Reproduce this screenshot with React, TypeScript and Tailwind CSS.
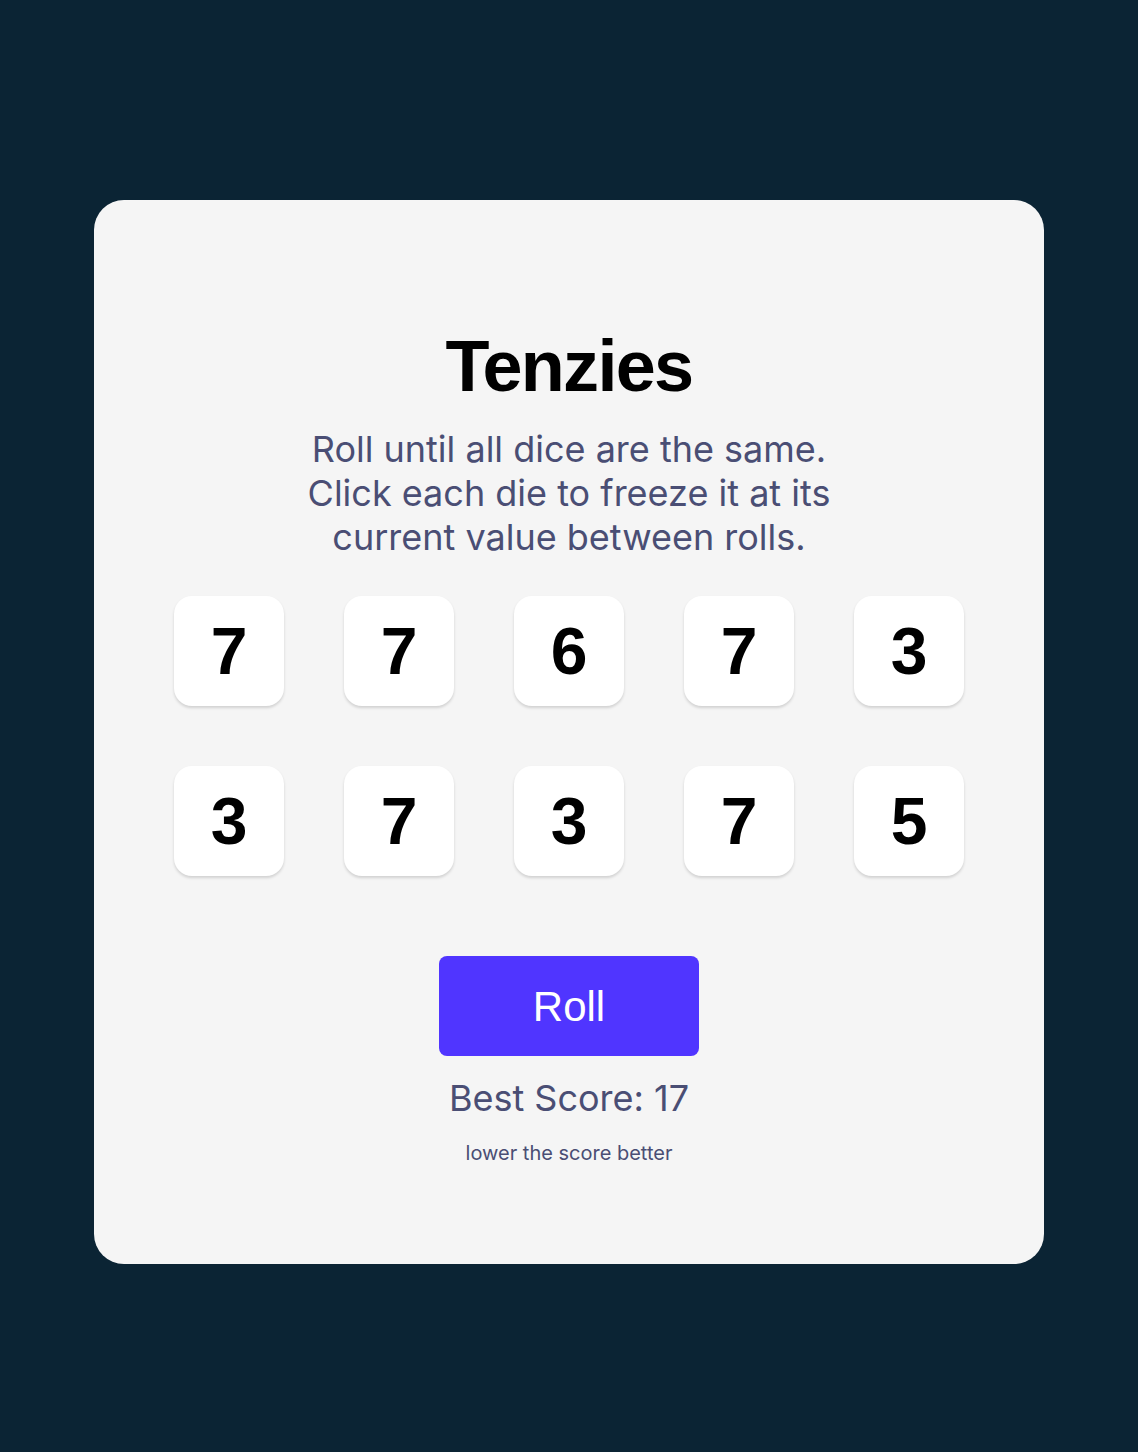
import React from "react";

const dice = [7, 7, 6, 7, 3, 3, 7, 3, 7, 5];

export default function App() {
  return (
    <div className="min-h-[1452px] w-full bg-[#0B2434] flex justify-center pt-[200px]" style={{ fontFamily: "Inter, 'Noto Sans', sans-serif" }}>
      <main className="w-[950px] h-[1064px] bg-[#F5F5F5] rounded-[30px] flex flex-col items-center pt-[123px]">
        <h1 className="text-[72px] font-bold text-black leading-[87px] tracking-[-1.7px] m-0" style={{ fontFamily: "'Liberation Sans', Arial, sans-serif" }}>Tenzies</h1>
        <p className="mt-[17px] text-[36px] leading-[44px] text-[#4A4E74] text-center w-[540px]">
          Roll until all dice are the same. Click each die to freeze it at its current value between rolls.
        </p>
        <div className="mt-[37px] grid grid-cols-5 gap-[60px]">
          {dice.map((d, i) => (
            <button
              key={i}
              className="w-[110px] h-[110px] bg-white rounded-[18px] shadow-[0_2px_3px_rgba(0,0,0,0.15)] flex items-center justify-center text-[66px] font-bold text-black"
              style={{ fontFamily: "'Liberation Sans', Arial, sans-serif" }}
            >
              {d}
            </button>
          ))}
        </div>
        <button
          className="mt-[80px] w-[260px] h-[100px] bg-[#5035FF] rounded-[8px] text-white text-[42px] flex items-center justify-center"
          style={{ fontFamily: "'Liberation Sans', Arial, sans-serif" }}
        >
          Roll
        </button>
        <p className="mt-[20px] text-[36px] leading-[44px] text-[#4A4E74]">Best Score: 17</p>
        <p className="mt-[21px] text-[20px] leading-[24px] text-[#4A4E74]">lower the score better</p>
      </main>
    </div>
  );
}
